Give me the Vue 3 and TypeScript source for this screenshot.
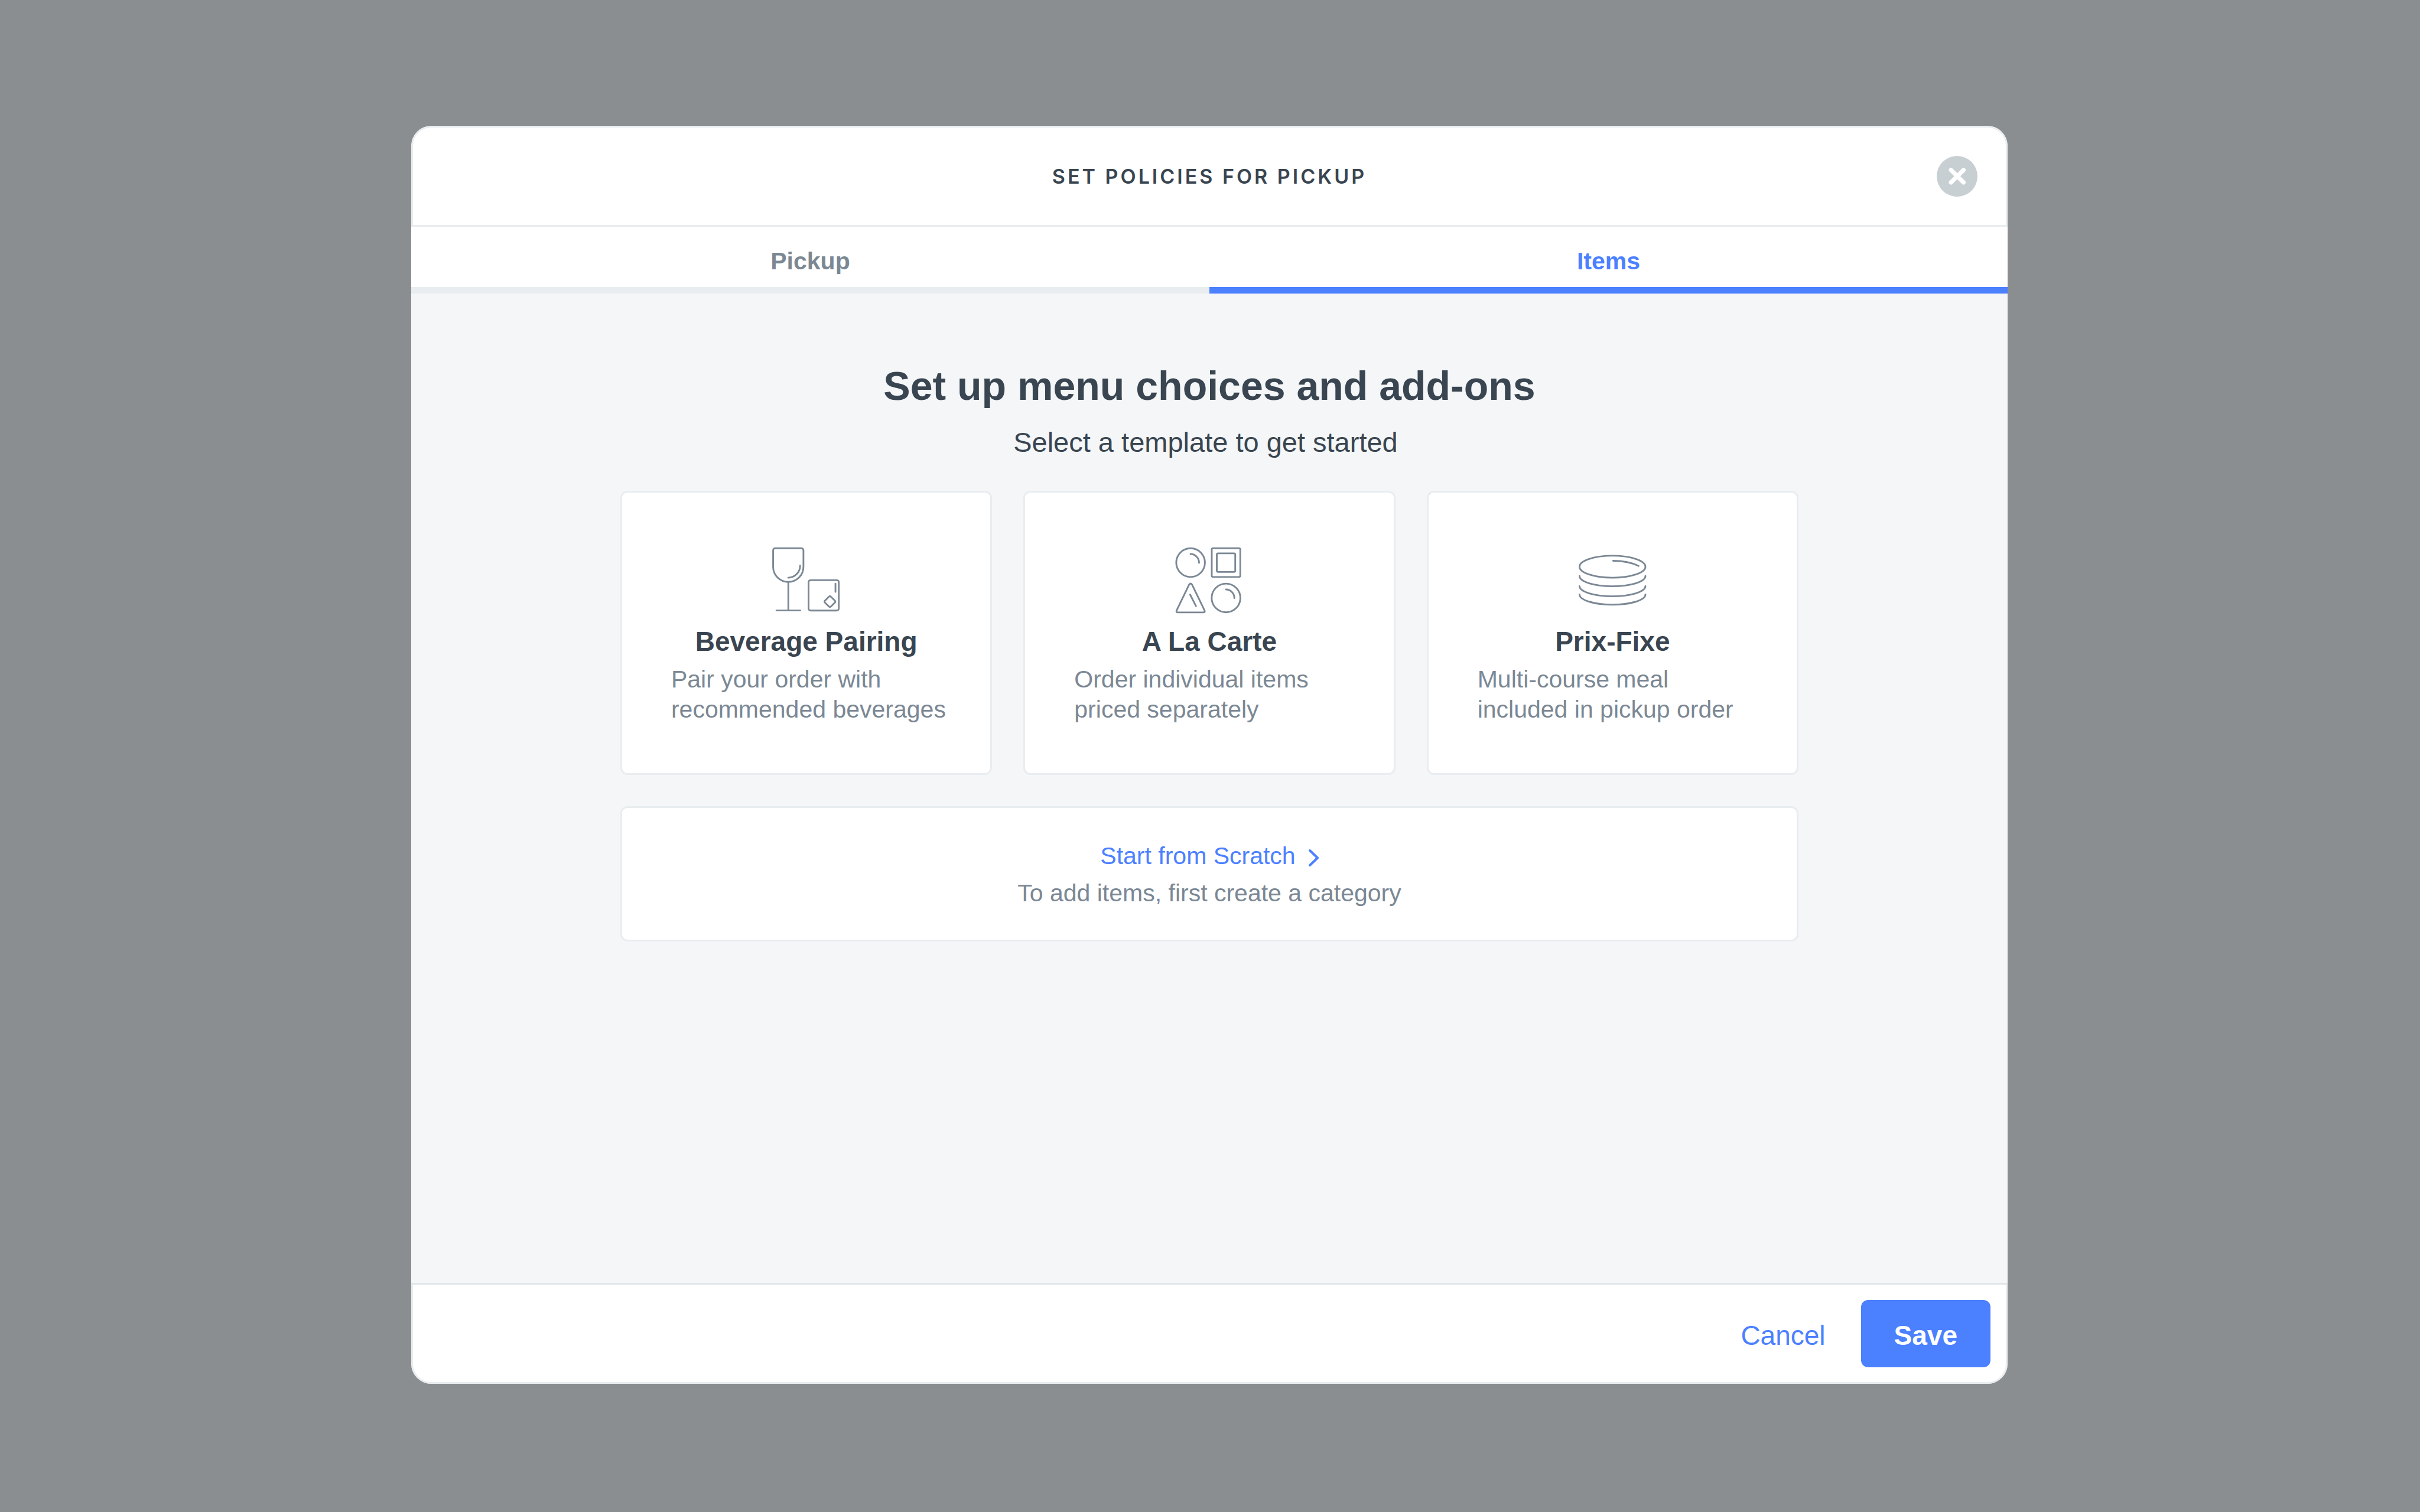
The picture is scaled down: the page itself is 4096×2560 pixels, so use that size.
<script setup lang="ts">
import { ref } from 'vue'

type TabId = 'pickup' | 'items'
type IconId = 'beverage' | 'carte' | 'fixe'

interface Template {
  id: IconId
  title: string
  text: string
  viewBox: string
}

const tabs: { id: TabId; label: string }[] = [
  { id: 'pickup', label: 'Pickup' },
  { id: 'items', label: 'Items' },
]

const templates: Template[] = [
  {
    id: 'beverage',
    title: 'Beverage Pairing',
    text: 'Pair your order with recommended beverages',
    viewBox: '147 50 474 474',
  },
  {
    id: 'carte',
    title: 'A La Carte',
    text: 'Order individual items priced separately',
    viewBox: '143 50 474 474',
  },
  {
    id: 'fixe',
    title: 'Prix-Fixe',
    text: 'Multi-course meal included in pickup order',
    viewBox: '142 50 474 474',
  },
]

const activeTab = ref<TabId>('items')
</script>

<template>
  <div class="backdrop">
    <section class="modal" role="dialog" aria-labelledby="dialog-title">
      <header class="head">
        <h1 id="dialog-title" class="head-title">SET POLICIES FOR PICKUP</h1>
        <button class="close" type="button" aria-label="Close">
          <svg viewBox="270 254 240 240" aria-hidden="true">
            <circle cx="390" cy="374" r="120" fill="#c8cfd3" />
            <path d="M354 337L428 410M428 337L354 410" stroke="#fff" stroke-width="25" stroke-linecap="round" />
          </svg>
        </button>
      </header>

      <nav class="tabs" role="tablist">
        <button
          v-for="tab in tabs"
          :key="tab.id"
          class="tab"
          :class="{ active: tab.id === activeTab }"
          type="button"
          role="tab"
          :aria-selected="tab.id === activeTab"
          @click="activeTab = tab.id"
        >
          {{ tab.label }}
        </button>
      </nav>

      <main class="body">
        <h2 class="heading">Set up menu choices and add-ons</h2>
        <p class="sub">Select a template to get started&nbsp;</p>

        <div class="cards">
          <button v-for="item in templates" :key="item.id" class="card" type="button">
            <svg class="icon" :viewBox="item.viewBox" aria-hidden="true">
              <g v-if="item.id === 'beverage'">
                <path d="M202.500 99.500H356A12 12 0 0 1 368 111.500V208A88.750 88.750 0 0 1 190.500 208V111.500A12 12 0 0 1 202.500 99.500Z" />
                <path d="M348.500 201A70 71 0 0 1 279 272" />
                <path d="M279.500 297V464M210 464H349" />
                <rect x="398" y="286.500" width="177" height="178" rx="12" />
                <path d="M555.500 307V355" />
                <rect x="498.500" y="387.500" width="49" height="49" rx="9" transform="rotate(45 523 412)" />
              </g>
              <g v-else-if="item.id === 'carte'">
                <circle cx="271.500" cy="183.500" r="84" />
                <path d="M271 133A50 51 0 0 1 321 185" />
                <rect x="395.500" y="99.500" width="167" height="168" rx="8" />
                <rect x="425" y="129" width="108" height="109" rx="7" />
                <path d="M262 314L190 463Q185 475 197 475H346Q358 475 353 463L281 314Q271.500 298 262 314Z" />
                <path d="M269 371L303 438" />
                <circle cx="479" cy="390.500" r="84" />
                <path d="M479 340.500A50 51 0 0 1 528 392" />
              </g>
              <g v-else>
                <ellipse cx="378" cy="207.500" rx="193" ry="64.500" />
                <path d="M382 173Q470 173 531 203" />
                <path d="M185 262A193 60 0 0 0 571 262" />
                <path d="M185 321A193 60 0 0 0 571 321" />
                <path d="M185 370A193 60 0 0 0 571 370" />
              </g>
            </svg>
            <span class="card-title">{{ item.title }}</span>
            <span class="card-text">{{ item.text }}</span>
          </button>
        </div>

        <div class="scratch">
          <a class="scratch-link" href="#">
            Start from Scratch
            <svg class="chevron" viewBox="0 0 17 37" aria-hidden="true">
              <path d="M2 9L15 21.500L2 34" />
            </svg>
          </a>
          <p class="scratch-text">To add items, first create a category</p>
        </div>
      </main>

      <footer class="foot">
        <button class="cancel" type="button">Cancel</button>
        <button class="save" type="button">Save</button>
      </footer>
    </section>
  </div>
</template>

<style>
body {
  background: #8a8e91;
}
</style>

<style scoped>
.backdrop {
  box-sizing: border-box;
  min-height: 100vh;
  padding: 213px 2px 213px 0;
  display: flex;
  flex-direction: column;
  align-items: center;
  background: #8a8e91;
  color: #394550;
  font-family: "Liberation Sans", Arial, sans-serif;
}

button {
  margin: 0;
  padding: 0;
  border: 0;
  background: none;
  font: inherit;
  color: inherit;
  cursor: pointer;
}

h1,
h2,
p {
  margin: 0;
}

.modal {
  width: 66%;
  min-height: 83.2vh;
  display: flex;
  flex-direction: column;
  border-radius: 34px;
  background: #fff;
  overflow: hidden;
}

.head {
  display: grid;
  grid-template-columns: 1fr auto 1fr;
  align-items: center;
  padding: 48px;
  border: 3px solid #e9edf0;
  border-radius: 34px 34px 0 0;
}

.head-title {
  grid-column: 2;
  font-family: Inter, "Liberation Sans", sans-serif;
  font-size: 34px;
  line-height: 51px;
  font-weight: 600;
  letter-spacing: 4px;
}

.close {
  justify-self: end;
  width: 69px;
  height: 69px;
}

.close svg {
  display: block;
  width: 100%;
  height: 100%;
}

.tabs {
  display: grid;
  grid-template-columns: 1fr 1fr;
}

.tab {
  padding: 30px 0 15px;
  border-bottom: 11px solid #e9edf0;
  font-size: 41px;
  line-height: 57px;
  font-weight: 700;
  color: #7b8894;
}

.tab.active {
  border-color: #4b80ff;
  color: #4b80ff;
}

.body {
  flex: 1;
  display: flex;
  flex-direction: column;
  align-items: center;
  padding: 116px 0 53px;
  background: #f4f6f8;
}

.heading {
  font-size: 68px;
  line-height: 80px;
  font-weight: 700;
}

.sub {
  margin-top: 28px;
  font-size: 47px;
  line-height: 56px;
}

.cards {
  width: 73.8%;
  margin-top: 54px;
  display: grid;
  grid-template-columns: repeat(3, 1fr);
  gap: 53px;
}

.card,
.scratch {
  box-sizing: border-box;
  border: 3px solid #e9edf0;
  border-radius: 12px;
  background: #fff;
}

.card {
  display: flex;
  flex-direction: column;
  align-items: center;
  padding: 80px 72px 82px;
}

.icon {
  width: 137px;
  height: 137px;
  fill: none;
  stroke: #7b8894;
  stroke-width: 10;
  stroke-linecap: round;
  stroke-linejoin: round;
}

.card-title {
  margin-top: 9px;
  font-size: 46px;
  line-height: 52px;
  font-weight: 700;
}

.card-text {
  align-self: stretch;
  margin: 13px 0 0 11px;
  font-size: 41px;
  line-height: 51px;
  text-align: left;
  color: #7b8894;
}

.scratch {
  width: 73.8%;
  margin-top: 53px;
  padding: 56px 0 53px;
  display: flex;
  flex-direction: column;
  align-items: center;
  gap: 12px;
  font-size: 41px;
  line-height: 51px;
}

.scratch-link {
  display: flex;
  align-items: center;
  gap: 22px;
  color: #4b80ff;
  text-decoration: none;
}

.chevron {
  width: 17px;
  height: 37px;
  fill: none;
  stroke: #4b80ff;
  stroke-width: 4;
  stroke-linecap: round;
  stroke-linejoin: round;
}

.scratch-text {
  color: #7b8894;
}

.foot {
  display: flex;
  justify-content: flex-end;
  align-items: center;
  gap: 60px;
  padding: 25px 26px;
  border: 3px solid #e9edf0;
  border-radius: 0 0 34px 34px;
  box-shadow: 0 -1px 0 #d2d7da;
}

.cancel,
.save {
  padding: 32px 0 26px;
  font-size: 46px;
  line-height: 56px;
}

.cancel {
  color: #4b80ff;
}

.save {
  padding-right: 56px;
  padding-left: 56px;
  border-radius: 12px;
  background: #4b80ff;
  color: #fff;
  font-weight: 700;
}
</style>
